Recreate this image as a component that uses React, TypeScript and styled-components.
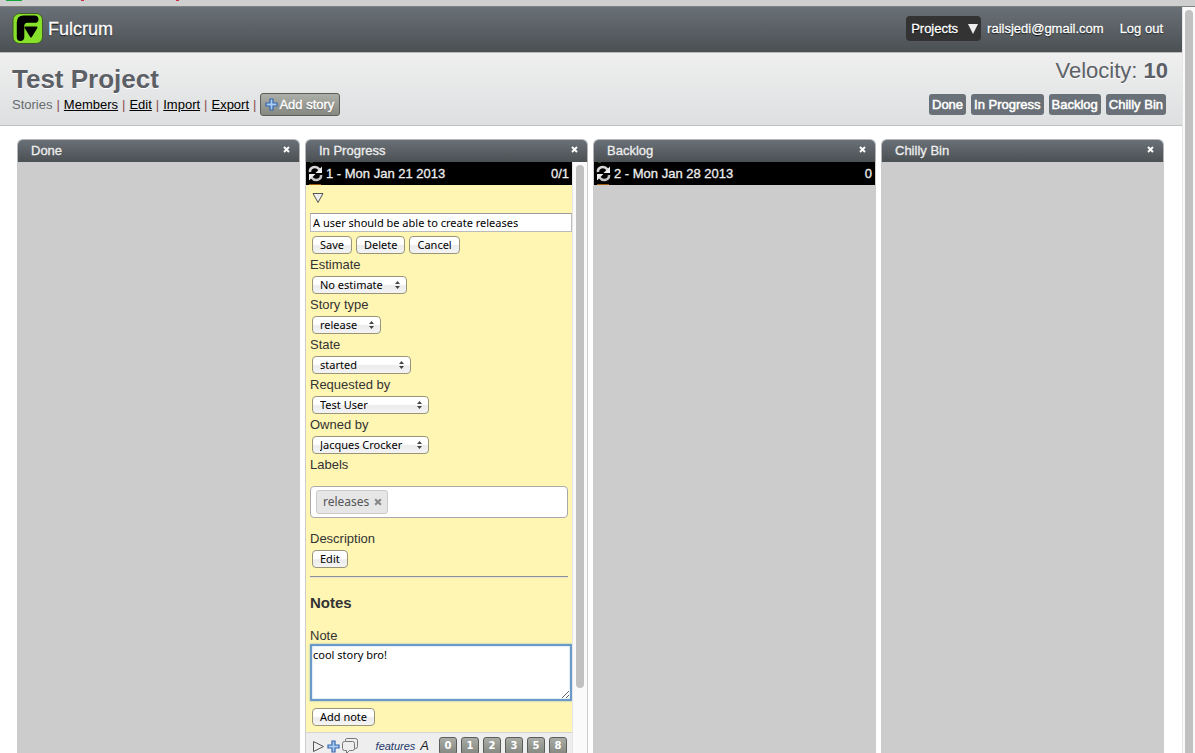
import React from "react";
import styled, { createGlobalStyle, css } from "styled-components";

const helv = `"Liberation Sans", Arial, sans-serif`;
const lucida = `"Noto Sans", "Open Sans", sans-serif`;
const steel = "linear-gradient(#697077, #4b5053)";

const Global = createGlobalStyle`
  * { box-sizing: border-box; }
  body { margin: 0; background: #fff; font: 13px/16px ${helv}; color: #333; overflow: hidden; }
  a { color: #000; }
  button, select, input, textarea { font-family: ${lucida}; }
`;

const Screen = styled.div`
  height: 100vh;
  display: flex;
  flex-direction: column;
`;

const WindowEdge = styled.div`
  height: 7px;
  flex: none;
  background: #cfcfcf;
  border-bottom: 1px solid #80837f;
`;

const FavIcon = styled.svg`
  display: block;
  margin-left: 6px;
`;

const Viewport = styled.div`
  flex: 1;
  min-height: 0;
  display: flex;
  overflow: hidden;
`;

const Page = styled.div`
  flex: 1;
  min-width: 0;
  display: flex;
  flex-direction: column;
`;

const ScrollTrack = styled.div<{ $width: number }>`
  width: ${(p) => p.$width}px;
  flex: none;
  display: flex;
  justify-content: center;
  padding-top: 3px;
  background: #fafafa;
  border-left: 1px solid #e6e6e6;
`;

const ScrollThumb = styled.div<{ $length: string }>`
  width: 8px;
  height: ${(p) => p.$length};
  border-radius: 4px;
  background: #c1c1c1;
`;

const Header = styled.header`
  height: 46px;
  flex: none;
  display: flex;
  align-items: center;
  justify-content: space-between;
  padding: 0 19px 2px 12px;
  background: ${steel};
  border-bottom: 1px solid #b9bbbc;
  color: #fff;
  text-shadow: 0 1px 1px #000;
`;

const Brand = styled.a`
  display: flex;
  align-items: center;
  gap: 5px;
  color: #fff;
  font-size: 18px;
  line-height: 20px;
  text-decoration: none;
  -webkit-text-stroke: 0.3px #fff;
`;

const UserNav = styled.nav`
  display: flex;
  align-items: center;
  gap: 16px;

  a {
    color: #fff;
    text-decoration: none;
    -webkit-text-stroke: 0.3px #fff;
  }
`;

const NavGroup = styled.div`
  display: flex;
  align-items: center;
  gap: 6px;
`;

const ProjectsButton = styled.button`
  display: flex;
  align-items: center;
  gap: 10px;
  height: 25px;
  padding: 0 3px 0 5px;
  border: 0;
  border-radius: 4px;
  background: #333;
  color: #fff;
  font: 13px/16px ${helv};
  text-shadow: 0 1px 1px #000;
  -webkit-text-stroke: 0.3px #fff;
`;

const TitleBar = styled.section`
  height: 73px;
  flex: none;
  display: flex;
  justify-content: space-between;
  padding: 0 14px 0 12px;
  background: linear-gradient(#efefef, #dddfe0);
  border-bottom: 1px solid #bfc0c0;
`;

const ProjectTitle = styled.h1`
  margin: 12px 0 0;
  font-size: 26px;
  line-height: 28px;
  color: #5c6066;
  text-shadow: 0 1px 0 #fff;
`;

const ProjectNav = styled.nav`
  display: flex;
  align-items: center;
  gap: 4px;
  height: 23px;
  white-space: nowrap;
  color: #666b70;
`;

const Divider = styled.span`
  color: #8c5050;
`;

const AddStory = styled.button`
  display: flex;
  align-items: center;
  gap: 1px;
  height: 23px;
  padding: 0 5px 0 4px;
  border: 1px solid #5b5d58;
  border-radius: 3px;
  background: linear-gradient(#adb0a8, #868982);
  color: #fff;
  font: 13px/16px ${helv};
  text-shadow: 0 1px 1px #555;
  -webkit-text-stroke: 0.4px #fff;
`;

const Summary = styled.div`
  display: flex;
  flex-direction: column;
  align-items: flex-end;
`;

const Velocity = styled.div`
  margin-top: 5px;
  font-size: 22px;
  line-height: 26px;
  color: #5c6066;
  text-shadow: 0 1px 0 #fff;
`;

const Toggles = styled.div`
  display: flex;
  gap: 5px;
  margin: 10px 2px 0 0;
`;

const Toggle = styled.button`
  height: 21px;
  padding: 0 3px;
  border: 0;
  border-radius: 3px;
  background: #697077;
  color: #fff;
  font: 13px/16px ${helv};
  -webkit-text-stroke: 0.5px #fff;
`;

const Board = styled.main`
  flex: 1;
  min-height: 0;
  display: flex;
  gap: 5px;
  padding: 13px 18px 0 17px;
`;

const Column = styled.section`
  flex: 1;
  min-width: 0;
  display: flex;
  flex-direction: column;
`;

const ColumnHead = styled.header`
  height: 23px;
  flex: none;
  display: flex;
  align-items: center;
  justify-content: space-between;
  padding: 0 9px 0 13px;
  border: 1px solid #b4b6b8;
  border-bottom: 0;
  border-radius: 6px 6px 0 0;
  background: ${steel};
  color: #eee;
`;

const ColumnName = styled.h2`
  margin: 0;
  font: 13px/16px ${helv};
  -webkit-text-stroke: 0.3px #eee;
`;

const CloseButton = styled.button`
  display: flex;
  padding: 0;
  margin-bottom: 3px;
  border: 0;
  background: none;
`;

const ColumnBody = styled.div`
  flex: 1;
  min-height: 0;
  display: flex;
  border: solid #ccc;
  border-width: 0 1px;
  background: #ccc;
`;

const ColumnItems = styled.div`
  flex: 1;
  min-width: 0;
  overflow: hidden;
`;

const Iteration = styled.div`
  display: flex;
  align-items: center;
  gap: 3px;
  height: 23px;
  padding: 0 3px 0 2px;
  background: #000;
  color: #eee;
  -webkit-text-stroke: 0.3px #eee;
`;

const IterationDate = styled.span`
  flex: 1;
`;

const StoryForm = styled.form`
  display: flex;
  flex-direction: column;
  align-items: flex-start;
  padding: 7px 4px 6px 4px;
  background: #fff6b3;
  border-bottom: 1px solid #d5d5cf;
`;

const Collapse = styled.button`
  display: flex;
  padding: 0 0 0 2px;
  border: 0;
  background: none;
`;

const TitleInput = styled.input`
  width: calc(100% + 4px);
  height: 19px;
  margin: 9px -4px 4px 0;
  padding: 0 2px;
  border: 1px solid #bbb;
  border-top-color: #999;
  border-radius: 0;
  background: #fff;
  color: #000;
  font-size: 11px;
`;

const ButtonRow = styled.div`
  display: flex;
  gap: 4px;
  padding: 0 2px;
`;

const control = css`
  height: 18px;
  border: 1px solid #9a9577;
  border-radius: 4px;
  background-color: #fff;
  background-image: linear-gradient(#fff 45%, #ececec 55%, #f4f4f4);
  color: #000;
  font-size: 11px;
  line-height: 16px;
`;

const FormButton = styled.button`
  ${control}
  padding: 0 7px;
`;

const Field = styled.div`
  display: flex;
  flex-direction: column;
  align-items: flex-start;
  height: 40px;
  padding-top: 2px;

  label { line-height: 18px; margin-bottom: 2px; }
`;

const SelectWrap = styled.span<{ $width: number }>`
  display: grid;
  align-items: center;
  justify-items: end;
  width: ${(p) => p.$width}px;
  margin-left: 2px;

  > * { grid-area: 1 / 1; }
  svg { margin-right: 7px; z-index: 1; pointer-events: none; }
`;

const Select = styled.select`
  ${control}
  width: 100%;
  padding: 0 7px;
  appearance: none;
`;

const FieldCaption = styled.div`
  line-height: 18px;
  padding: 2px 0;
`;

const TagBox = styled.div`
  display: flex;
  width: 100%;
  height: 32px;
  margin: 10px 0;
  padding: 3px 5px;
  border: 1px solid #aaa;
  border-radius: 4px;
  background: #fff;
`;

const Tag = styled.span`
  display: flex;
  align-items: center;
  gap: 5px;
  height: 24px;
  padding: 0 5px 0 6px;
  border: 1px solid #cacaca;
  border-radius: 3px;
  background: #e6e6e6;
  color: #555;
  font: 12px/16px ${lucida};
`;

const TagRemove = styled.button`
  display: flex;
  padding: 0;
  border: 0;
  background: none;
`;

const Rule = styled.hr`
  width: 100%;
  height: 2px;
  margin: 8px 0 0;
  border: solid;
  border-width: 1px 0;
  border-color: #8f8f9c #e9e6cc #e9e6cc;
`;

const NotesTitle = styled.h3`
  margin: 16px 0;
  font-size: 15px;
  line-height: 18px;
`;

const NoteArea = styled.textarea`
  width: calc(100% + 4px);
  height: 57px;
  margin: 0 -4px 7px 0;
  padding: 2px 1px;
  border: 2px solid #6a9bc8;
  border-radius: 0;
  outline: 0;
  box-shadow: inset 0 0 2px #9cc2e5, 0 0 2px #8fb4c8;
  background: #fff;
  color: #000;
  font-size: 11px;
  line-height: 13px;
`;

const StoryRow = styled.div`
  display: flex;
  align-items: center;
  height: 26px;
  padding: 0 5px 0 6px;
  background: #eee;
`;

const StoryIcons = styled.div`
  display: flex;
  align-items: center;
  gap: 2px;
  flex: 1;
`;

const StoryTag = styled.span`
  display: flex;
  gap: 5px;
  margin-right: 10px;
  font-style: italic;
  font-size: 13px;
  color: #222;

  a { color: #1d376b; font-size: 11px; text-decoration: none; }
`;

const Points = styled.div`
  display: flex;
  gap: 4px;
`;

const Point = styled.button`
  width: 18px;
  height: 18px;
  padding: 0;
  border: 1px solid #5b5d58;
  border-radius: 3px;
  background: linear-gradient(#a9aca4, #858881);
  color: #fff;
  font: bold 10px/16px "DejaVu Sans", sans-serif;
`;

const Logo = () => (
  <svg width="31" height="31" viewBox="0 0 31 31">
    <rect x="1" y="0.5" width="29.5" height="30" rx="6.500" fill="#87e12b" stroke="#3f5b25" />
    <path
      d="M11.500 2.500H22.500C25 2.500 26.500 4 26.500 6.500 26.500 9 25 9.800 22.500 9.800H15.500Q12.300 9.800 12.300 13V24C12.300 26.500 10.500 28 8.500 28 6 28 4.800 26.500 4.800 24V9.500Q4.800 2.500 11.500 2.500Z"
      fill="#000"
    />
    <path d="M13.500 14.500H24.500L19 23.500Z" fill="#000" stroke="#000" strokeWidth="2" strokeLinejoin="round" />
  </svg>
);

const Plus = () => (
  <svg width="13" height="13" viewBox="0 0 13 13">
    <path d="M5 1h3v4h4v3H8v4H5V8H1V5h4Z" fill="#a9cdf2" stroke="#3667ad" strokeWidth="1.200" />
  </svg>
);

const Cross = ({ size = 7, color = "#fff" }: { size?: number; color?: string }) => (
  <svg width={size} height={size} viewBox="0 0 7 7">
    <path d="M1 1l5 5M6 1l-5 5" stroke={color} strokeWidth="1.900" />
  </svg>
);

const Recycle = () => (
  <svg width="15" height="23" viewBox="0 0 15 23">
    <path d="M2 10C1.500 5 8 3 11.500 7.500" fill="none" stroke="#d8d8d8" strokeWidth="2.600" />
    <path d="M13 13C13.500 18 7 20 3.500 15.500" fill="none" stroke="#c4c4c4" strokeWidth="2.600" />
    <path d="M14 4.500v6.500H7.500Z" fill="#eee" />
    <path d="M1 18.500V12h6.500Z" fill="#eee" />
    <path d="M1 22.500h12" stroke="#9a5c08" />
    <path d="M2 .5h3" stroke="#1d4a12" />
  </svg>
);

const UpDown = () => (
  <svg width="5" height="8" viewBox="0 0 5 8">
    <path d="M0 3L2.500 0 5 3ZM0 5l2.500 3L5 5Z" fill="#444" />
  </svg>
);

const columnNames = ["Done", "In Progress", "Backlog", "Chilly Bin"];

const selects = [
  { id: "estimate", label: "Estimate", value: "No estimate", width: 95 },
  { id: "type", label: "Story type", value: "release", width: 69 },
  { id: "state", label: "State", value: "started", width: 99 },
  { id: "requester", label: "Requested by", value: "Test User", width: 117 },
  { id: "owner", label: "Owned by", value: "Jacques Crocker", width: 117 },
];

const IterationBar = ({ text, points }: { text: string; points: string }) => (
  <Iteration>
    <Recycle />
    <IterationDate>{text}</IterationDate>
    <span>{points}</span>
  </Iteration>
);

const StoryEditor = () => (
  <StoryForm onSubmit={(e) => e.preventDefault()}>
    <Collapse type="button" aria-label="Collapse story">
      <svg width="13" height="12" viewBox="0 0 13 12">
        <path d="M1 1.500h10L6 10.500Z" fill="#eee" stroke="#555" />
      </svg>
    </Collapse>
    <TitleInput aria-label="Title" defaultValue="A user should be able to create releases" />
    <ButtonRow>
      <FormButton>Save</FormButton>
      <FormButton type="button">Delete</FormButton>
      <FormButton type="button">Cancel</FormButton>
    </ButtonRow>
    {selects.map((s) => (
      <Field key={s.id}>
        <label htmlFor={s.id}>{s.label}</label>
        <SelectWrap $width={s.width}>
          <Select id={s.id}>
            <option>{s.value}</option>
          </Select>
          <UpDown />
        </SelectWrap>
      </Field>
    ))}
    <FieldCaption>Labels</FieldCaption>
    <TagBox>
      <Tag>
        releases
        <TagRemove type="button" aria-label="Remove releases">
          <Cross size={8} color="#888" />
        </TagRemove>
      </Tag>
    </TagBox>
    <FieldCaption>Description</FieldCaption>
    <ButtonRow>
      <FormButton type="button">Edit</FormButton>
    </ButtonRow>
    <Rule />
    <NotesTitle>Notes</NotesTitle>
    <label htmlFor="note">Note</label>
    <NoteArea id="note" defaultValue="cool story bro!" />
    <ButtonRow>
      <FormButton type="button">Add note</FormButton>
    </ButtonRow>
  </StoryForm>
);

const NextStory = () => (
  <StoryRow>
    <StoryIcons>
      <svg width="13" height="13" viewBox="0 0 13 13">
        <path d="M1.500 1.500v10l10-5Z" fill="#eee" stroke="#555" />
      </svg>
      <Plus />
      <svg width="16" height="16" viewBox="0 0 16 16" fill="#eee" stroke="#777">
        <path d="M4.500.5h9q2 0 2 2v6q0 2-2 2h-9q-1 0-1-2v-6q0-2 1-2Z" />
        <path d="M2.500 3.500h8q2 0 2 2v5q0 2-2 2h-3l-3 3v-3h-2q-2 0-2-2v-5q0-2 2-2Z" />
      </svg>
    </StoryIcons>
    <StoryTag>
      <a href="#features">features</a>A
    </StoryTag>
    <Points>
      {["0", "1", "2", "3", "5", "8"].map((n) => (
        <Point key={n}>{n}</Point>
      ))}
    </Points>
  </StoryRow>
);

export default function App() {
  return (
    <Screen>
      <Global />
      <WindowEdge>
        <FavIcon width="174" height="2" viewBox="0 0 174 2">
          <path d="M0 0h16v1H0Z" fill="#12a83c" />
          <path d="M75 0h3v1h-3ZM170 0h3v1h-3Z" fill="#c8304a" />
        </FavIcon>
      </WindowEdge>
      <Viewport>
        <Page>
          <Header>
            <Brand href="#home">
              <Logo />
              Fulcrum
            </Brand>
            <UserNav>
              <NavGroup>
                <ProjectsButton>
                  Projects
                  <svg width="10" height="11" viewBox="0 0 10 11">
                    <path d="M0 1h10L5 11Z" fill="#eee" />
                  </svg>
                </ProjectsButton>
                <a href="#profile">railsjedi@gmail.com</a>
              </NavGroup>
              <a href="#logout">Log out</a>
            </UserNav>
          </Header>
          <TitleBar>
            <div>
              <ProjectTitle>Test Project</ProjectTitle>
              <ProjectNav>
                Stories
                {["Members", "Edit", "Import", "Export"].map((name) => (
                  <React.Fragment key={name}>
                    <Divider>|</Divider>
                    <a href={`#${name.toLowerCase()}`}>{name}</a>
                  </React.Fragment>
                ))}
                <Divider>|</Divider>
                <AddStory>
                  <Plus />
                  Add story
                </AddStory>
              </ProjectNav>
            </div>
            <Summary>
              <Velocity>
                Velocity: <b>10</b>
              </Velocity>
              <Toggles>
                {columnNames.map((name) => (
                  <Toggle key={name}>{name}</Toggle>
                ))}
              </Toggles>
            </Summary>
          </TitleBar>
          <Board>
            {columnNames.map((name) => (
              <Column key={name}>
                <ColumnHead>
                  <ColumnName>{name}</ColumnName>
                  <CloseButton aria-label={`Close ${name}`}>
                    <Cross />
                  </CloseButton>
                </ColumnHead>
                <ColumnBody>
                  <ColumnItems>
                    {name === "In Progress" && (
                      <>
                        <IterationBar text="1 - Mon Jan 21 2013" points="0/1" />
                        <StoryEditor />
                        <NextStory />
                      </>
                    )}
                    {name === "Backlog" && <IterationBar text="2 - Mon Jan 28 2013" points="0" />}
                  </ColumnItems>
                  {name === "In Progress" && (
                    <ScrollTrack $width={15}>
                      <ScrollThumb $length="89%" />
                    </ScrollTrack>
                  )}
                </ColumnBody>
              </Column>
            ))}
          </Board>
        </Page>
        <ScrollTrack $width={13}>
          <ScrollThumb $length="120%" />
        </ScrollTrack>
      </Viewport>
    </Screen>
  );
}
